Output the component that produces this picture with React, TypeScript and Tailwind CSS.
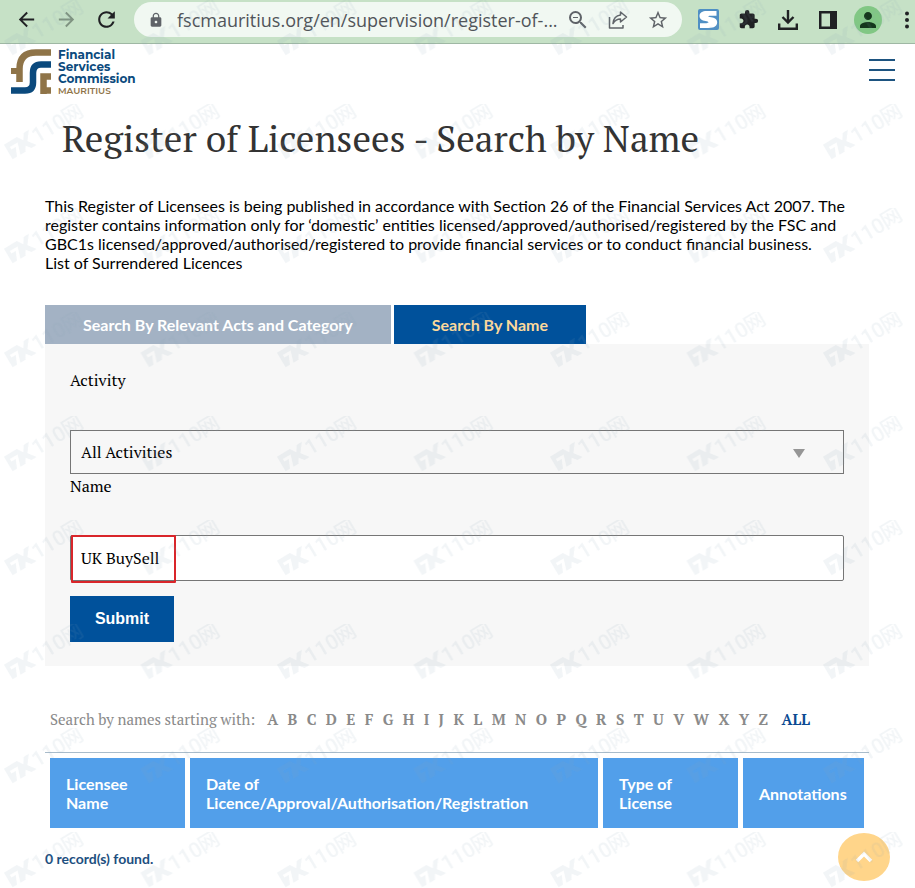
import { useState, type FormEvent, type ReactNode } from 'react';
import {
  MdArrowBack,
  MdArrowForward,
  MdExtension,
  MdLock,
  MdPerson,
  MdRefresh,
  MdStarBorder,
  MdZoomOut,
} from 'react-icons/md';

const serif = "font-['PT_Serif','Liberation_Serif',serif]";
const letters = 'ABCDEFGHIJKLMNOPQRSTUVWXYZ'.split('');

const columns = [
  { label: 'Licensee Name', className: 'w-[135px]' },
  { label: 'Date of Licence/Approval/Authorisation/Registration', className: '' },
  { label: 'Type of License', className: 'w-[135px]' },
  { label: 'Annotations', className: 'w-[121px]' },
];

function ToolbarButton({ label, children }: { label: string; children: ReactNode }) {
  return (
    <button type="button" aria-label={label} className="flex h-9 w-10 shrink-0 items-center justify-center">
      {children}
    </button>
  );
}

function BrowserBar() {
  return (
    <div className="flex h-11 items-center border-b border-[#9fb8a4] bg-[#c6e1c6] pb-1 pl-[6px] text-[#202124]">
      <ToolbarButton label="Back"><MdArrowBack size={23} /></ToolbarButton>
      <ToolbarButton label="Forward"><MdArrowForward size={23} className="text-[#7f9381]" /></ToolbarButton>
      <ToolbarButton label="Reload"><MdRefresh size={25} /></ToolbarButton>

      <div className="ml-2 flex h-[35px] min-w-0 flex-1 items-center rounded-full bg-[#f1f8f2] pr-1 pl-2 text-[#5f6368]">
        <span className="flex w-7 shrink-0 justify-center"><MdLock size={16} /></span>
        <input
          aria-label="Address"
          readOnly
          value="fscmauritius.org/en/supervision/register-of-..."
          className="ml-[7px] h-8 min-w-0 flex-1 bg-transparent font-['Segoe_UI','Open_Sans',sans-serif] text-[18px] text-[#505459] outline-none"
        />
        <ToolbarButton label="Zoom"><MdZoomOut size={24} /></ToolbarButton>
        <ToolbarButton label="Share">
          <svg width="22" height="20" viewBox="0 0 22 20" fill="none" stroke="currentColor" strokeWidth="1.500" strokeLinejoin="round">
            <path d="M2.500 7v11h13.500v-3" />
            <path d="M13.500 2l6 5-6 5V9C10 9 8 10.200 6 13.500 6.500 8.500 9 5.500 13.500 5z" />
          </svg>
        </ToolbarButton>
        <ToolbarButton label="Bookmark"><MdStarBorder size={22} /></ToolbarButton>
      </div>

      <div className="ml-[6px] flex shrink-0 items-center">
        <ToolbarButton label="S extension">
          <svg width="21" height="21" viewBox="0 0 21 21">
            <rect width="21" height="21" rx="2" fill="#4f8fc4" />
            <path d="M18.500 2H8.500C4.500 2 1.500 3.800 1.500 6.900c0 3.100 2.600 4.500 5.800 5.100 2.200.4 3.100.7 3.100 1.300s-.7.900-1.900.9H2V19h9c5 0 8.200-2 8.200-5.700 0-3.200-2.500-4.500-6.100-5.100-2.200-.4-2.800-.5-2.800-.9s.7-.6 1.800-.6h6.400z" fill="#fff" />
          </svg>
        </ToolbarButton>
        <ToolbarButton label="Extensions"><MdExtension size={21} /></ToolbarButton>
        <ToolbarButton label="Downloads">
          <svg width="22" height="22" viewBox="0 0 22 22" fill="none" stroke="currentColor" strokeWidth="2.400">
            <path d="M11 1v12M5.500 8l5.500 5.500L16.500 8M2.200 14.500v5.300h17.600v-5.300" />
          </svg>
        </ToolbarButton>
        <ToolbarButton label="Side panel">
          <svg width="18" height="18" viewBox="0 0 18 18" fill="currentColor">
            <path d="M0 0h18v18H0zM2.500 2.500v13h8.500v-13z" fillRule="evenodd" />
          </svg>
        </ToolbarButton>
        <ToolbarButton label="Profile">
          <span className="flex size-7 items-center justify-center rounded-full bg-[#81c784] text-[#14371c]">
            <MdPerson size={24} />
          </span>
        </ToolbarButton>
        <button type="button" aria-label="Menu" className="flex h-9 w-[27px] items-center justify-end">
          <svg width="16" height="18" viewBox="0 0 16 18" fill="currentColor">
            <circle cx="8" cy="2.500" r="2" />
            <circle cx="8" cy="9" r="2" />
            <circle cx="8" cy="15.500" r="2" />
          </svg>
        </button>
      </div>
    </div>
  );
}

function SiteHeader() {
  return (
    <header className="flex items-start justify-between pt-[5px] pr-5 pl-[10px]">
      <a href="#" className="flex gap-[7px]">
        <svg width="41" height="47" viewBox="0 0 41 47" fill="none" className="shrink-0">
          <g stroke="#8f7448" strokeWidth="6.500">
            <path d="M41 3.500H26Q9.500 3.500 9.500 20V33" />
            <path d="M1 22h8" strokeWidth="6" />
            <path d="M41 27.500h-7.500V45M34 41.500h7" />
          </g>
          <path d="M1 41.500h14q8 0 8-8V24q0-8.500 8-8.500h10" stroke="#0b4a7d" strokeWidth="6.500" />
        </svg>
        <span className="font-['Montserrat','Inter',sans-serif] text-[12px] leading-3 font-bold text-[#0b4a7d]">
          Financial
          <br />
          Services
          <br />
          Commission
          <span className="block text-[9px] font-semibold text-[#8f7448]">MAURITIUS</span>
        </span>
      </a>
      <button type="button" aria-label="Open menu" className="mt-[10px] flex w-[26px] flex-col gap-2">
        <span className="h-[2px] w-full bg-[#1d5480]" />
        <span className="h-[2px] w-full bg-[#1d5480]" />
        <span className="h-[2px] w-full bg-[#1d5480]" />
      </button>
    </header>
  );
}

function SearchForm() {
  const [name, setName] = useState('UK BuySell');

  const handleSubmit = (event: FormEvent<HTMLFormElement>) => {
    event.preventDefault();
  };

  return (
    <form onSubmit={handleSubmit} className={`bg-[#f7f7f7] px-[25px] pt-6 pb-6 text-[16px] leading-6 text-black ${serif}`}>
      <label htmlFor="activity" className="block">Activity</label>
      <div className="relative mt-[38px]">
        <select id="activity" className="block h-11 w-full appearance-none border border-[#767676] bg-transparent px-[10px]">
          <option>All Activities</option>
        </select>
        <svg width="12" height="9" viewBox="0 0 12 9" className="pointer-events-none absolute top-[19px] right-[39px]">
          <path d="M0 0h12L6 9z" fill="#969696" />
        </svg>
      </div>
      <label htmlFor="name" className="block">Name</label>
      <div className="relative mt-[37px]">
        <input
          id="name"
          value={name}
          onChange={(e) => setName(e.target.value)}
          className="block h-[46px] w-full rounded-[2px] border border-[#767676] bg-white px-[10px]"
        />
        <span className="pointer-events-none absolute top-0 left-[1px] h-12 w-[105px] rounded-[1px] border-2 border-[#d9252a]" />
      </div>
      <button type="submit" className="mt-[15px] h-[46px] w-[104px] bg-[#00519b] font-['Liberation_Sans',sans-serif] text-[16px] font-bold text-white">
        Submit
      </button>
    </form>
  );
}

function Watermark() {
  return (
    <svg aria-hidden="true" className="pointer-events-none absolute inset-0 z-20 h-full w-full">
      <defs>
        <pattern id="mark" width="136.500" height="104" patternUnits="userSpaceOnUse">
          <g transform="translate(13 54) rotate(-31)" fill="#8ba3b8" fillOpacity="0.110">
            <path d="M-1 -16H14L18 -10L22 -16H28L21 -7L27 1H21L17 -4L14 1H8L12 -11H3V-8H8L4 1H-1z" />
            <text x="28" y="0" fontSize="21" fontWeight="500" fontFamily="Roboto, 'Liberation Sans', sans-serif">110</text>
            <text x="63" y="0" fontSize="21" fontWeight="500" fontFamily="'Noto Sans CJK SC', sans-serif">网</text>
          </g>
        </pattern>
      </defs>
      <rect width="100%" height="100%" fill="url(#mark)" />
    </svg>
  );
}

export default function App() {
  return (
    <div className="relative min-h-screen overflow-hidden bg-white font-['Lato',sans-serif] text-[16px] leading-[19px] text-black">
      <BrowserBar />
      <SiteHeader />

      <main className="pr-[46px] pb-5 pl-[45px]">
        <h1 className={`mt-[18px] pl-[17px] text-[37px] leading-12 text-[#333] ${serif}`}>
          Register of Licensees - Search by Name
        </h1>

        <p className="mt-[33px]">
          This Register of Licensees is being published in accordance with Section 26 of the Financial Services Act 2007. The
          register contains information only for ‘domestic’ entities licensed/approved/authorised/registered by the FSC and
          GBC1s licensed/approved/authorised/registered to provide financial services or to conduct financial business.
        </p>
        <a href="#" className="block">List of Surrendered Licences</a>

        <div className="mt-[33px] flex gap-[3px] font-bold">
          <button type="button" className="h-[39px] bg-[#a3b2c4] px-[38px] text-white">
            Search By Relevant Acts and Category
          </button>
          <button type="button" className="h-[39px] bg-[#00519b] px-[38px] text-[#fcd99b]">
            Search By Name
          </button>
        </div>
        <SearchForm />

        <nav className={`mt-[41px] flex items-center pr-[59px] pl-[5px] text-[15px] leading-6 text-[#8a8a8a] ${serif}`}>
          <span className="mr-3 shrink-0">Search by names starting with:</span>
          <span className="flex flex-1 justify-between font-bold">
            {letters.map((letter) => (
              <a key={letter} href={`#${letter}`}>{letter}</a>
            ))}
            <a href="#all" className="ml-1 text-[#0b4a92]">ALL</a>
          </span>
        </nav>

        <div className="mt-[21px] border-t border-[#a9bccb]">
          <table className="w-full table-fixed border-separate border-spacing-[5px] text-left">
            <thead>
              <tr>
                {columns.map(({ label, className }) => (
                  <th key={label} className={`h-[70px] bg-[#529fea] px-4 align-middle font-bold text-white ${className}`}>
                    {label}
                  </th>
                ))}
              </tr>
            </thead>
          </table>
        </div>

        <p className="mt-4 text-[14px] font-bold text-[#1d4f80]">0 record(s) found.</p>
      </main>

      <button type="button" aria-label="Back to top" className="fixed right-[25px] bottom-[7px] z-10 flex h-12 w-[52px] items-center justify-center rounded-[50%] bg-[#ffd58a]">
        <svg width="18" height="12" viewBox="0 0 18 12" fill="none" stroke="#fff" strokeWidth="3.500">
          <path d="M2 10l7-7 7 7" />
        </svg>
      </button>
      <Watermark />
    </div>
  );
}
